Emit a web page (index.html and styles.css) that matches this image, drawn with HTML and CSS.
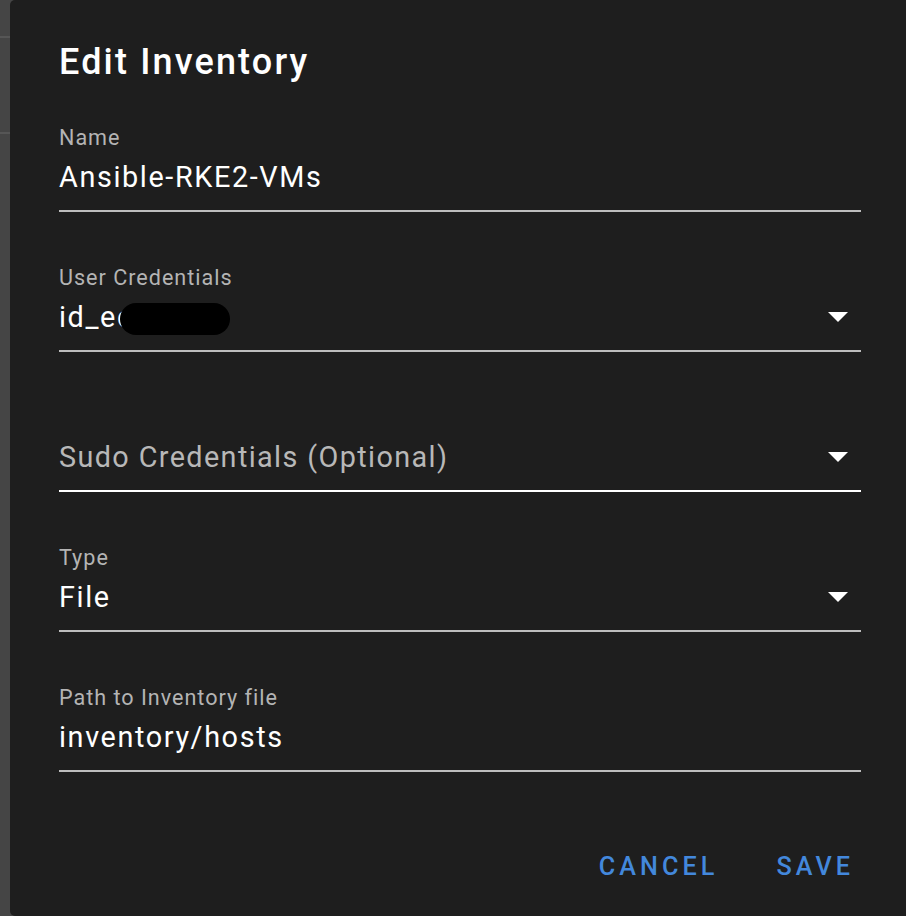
FILE: index.html
```html
<!DOCTYPE html>
<html lang="en">
<head>
<meta charset="utf-8">
<title>Edit Inventory</title>
<link rel="stylesheet" href="styles.css">
</head>
<body>
<div class="page">
  <aside class="backdrop">
    <div class="backdrop-row backdrop-row--top"></div>
    <div class="backdrop-row backdrop-row--second"></div>
  </aside>
  <section class="dialog">
    <h1 class="dialog-title">Edit Inventory</h1>
    <form class="fields">
      <div class="field">
        <div class="field-label">Name</div>
        <div class="field-control">
          <span class="field-value">Ansible-RKE2-VMs</span>
        </div>
      </div>
      <div class="field">
        <div class="field-label">User Credentials</div>
        <div class="field-control">
          <span class="field-value">id_ec</span>
          <span class="redaction"></span>
          <svg class="dropdown-arrow" viewBox="0 0 20 10" width="20" height="10"><polygon points="0,0 20,0 10,10" /></svg>
        </div>
      </div>
      <div class="field">
        <div class="field-label field-label--empty">&nbsp;</div>
        <div class="field-control field-control--active">
          <span class="field-placeholder">Sudo Credentials (Optional)</span>
          <svg class="dropdown-arrow" viewBox="0 0 20 10" width="20" height="10"><polygon points="0,0 20,0 10,10" /></svg>
        </div>
      </div>
      <div class="field">
        <div class="field-label">Type</div>
        <div class="field-control">
          <span class="field-value">File</span>
          <svg class="dropdown-arrow" viewBox="0 0 20 10" width="20" height="10"><polygon points="0,0 20,0 10,10" /></svg>
        </div>
      </div>
      <div class="field">
        <div class="field-label">Path to Inventory file</div>
        <div class="field-control">
          <span class="field-value">inventory/hosts</span>
        </div>
      </div>
    </form>
    <div class="actions">
      <button type="button" class="btn">Cancel</button>
      <button type="button" class="btn">Save</button>
    </div>
  </section>
</div>
</body>
</html>
```
FILE: styles.css
```css
* { box-sizing: border-box; }

html, body {
  margin: 0;
  padding: 0;
  height: 916px;
  overflow: hidden;
  background: #454545;
  font-family: Roboto, "Liberation Sans", Arial, sans-serif;
}

.page {
  display: flex;
  height: 916px;
}

.backdrop {
  width: 10px;
  flex: 0 0 10px;
  background: #454545;
}

.backdrop-row {
  border-bottom: 2px solid #565656;
}

.backdrop-row--top { height: 38px; }
.backdrop-row--second { height: 96px; }

.dialog {
  flex: 0 0 920px;
  height: 916px;
  background: #1e1e1e;
  border-radius: 5px;
  padding: 41px 0 0 49px;
}

.dialog-title {
  margin: 0;
  font-size: 36px;
  line-height: 42px;
  font-weight: 500;
  letter-spacing: 2.15px;
  color: #ffffff;
}

.fields {
  width: 802px;
  margin: 42px 0 0 0;
  display: flex;
  flex-direction: column;
  gap: 53px;
}

.field {
  display: flex;
  flex-direction: column;
}

.field-label {
  font-size: 21.6px;
  line-height: 26px;
  letter-spacing: 0.98px;
  color: #b4b4b4;
  margin-bottom: 9px;
}

.field-control {
  position: relative;
  display: flex;
  align-items: center;
  height: 52px;
  padding-bottom: 16px;
  border-bottom: 2px solid #bdbdbd;
}

.field-control--active {
  border-bottom-color: #ffffff;
}

.field-value {
  flex: 1;
  font-size: 28.8px;
  line-height: 34px;
  letter-spacing: 1.62px;
  color: #ffffff;
}

.field-placeholder {
  flex: 1;
  font-size: 28.8px;
  line-height: 34px;
  letter-spacing: 1.38px;
  color: #b8b8b8;
}

.redaction {
  position: absolute;
  left: 61px;
  top: 3px;
  width: 110px;
  height: 32px;
  border-radius: 16px;
  background: #000000;
}

.dropdown-arrow {
  flex: 0 0 20px;
  margin-right: 13px;
  fill: #ffffff;
}

.actions {
  width: 802px;
  margin-top: 77px;
  display: flex;
  justify-content: flex-end;
  gap: 58px;
  padding-right: 7px;
}

.btn {
  background: none;
  border: none;
  padding: 0;
  margin: 0;
  font-family: Roboto, "Liberation Sans", Arial, sans-serif;
  font-size: 25.2px;
  line-height: 36px;
  font-weight: 500;
  letter-spacing: 4.05px;
  text-transform: uppercase;
  color: #4388dc;
  cursor: pointer;
}
```
